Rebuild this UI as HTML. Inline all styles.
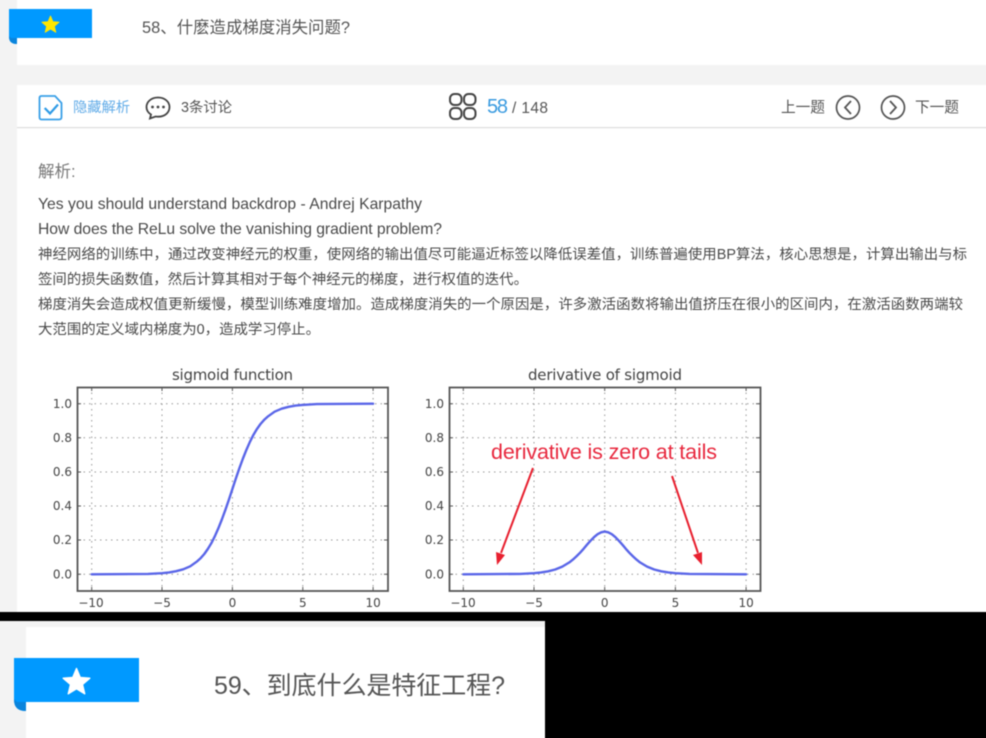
<!DOCTYPE html>
<html lang="zh-CN"><head><meta charset="utf-8"><title>58</title>
<style>
html,body{margin:0;padding:0;background:#fff;width:986px;height:738px;overflow:hidden}
svg{display:block;margin:-10px 0 0 -10px;filter:blur(.5px)}
text{font-family:"Liberation Sans","Noto Sans CJK SC",sans-serif;white-space:pre}
.d,.d text{font-family:"DejaVu Sans",sans-serif;fill:#444}
.t{font-size:12px}
.g{stroke:#999;stroke-width:1;stroke-dasharray:1.5 4;fill:none}
.c{font-size:14.4px;fill:#4a4a4a}
.e{font-size:15.7px;fill:#4a4a4a}
.ax{fill:none;stroke:#555;stroke-width:1.8}
.k{stroke:#555;stroke-width:1;fill:none}
.cv{fill:none;stroke:#5a66e8;stroke-width:2.4;stroke-linejoin:round;stroke-linecap:round}
</style></head><body>
<svg width="1006" height="758" viewBox="-10 -10 1006 758" xmlns="http://www.w3.org/2000/svg">
<defs><polygon id="s" points="0,-1 .265,-.364 .951,-.309 .428,.139 .588,.809 0,.45 -.588,.809 -.428,.139 -.951,-.309 -.265,-.364"/></defs>
<rect x="-10" y="-10" width="1006" height="758" fill="#fff"/>
<rect x="-10" y="-10" width="27" height="622" fill="#f3f3f3"/>
<rect x="17" y="65" width="979" height="20" fill="#f3f3f3"/>
<rect x="17" y="127" width="979" height="1.2" fill="#ddd"/>

<path d="M9 9H92V38H17V44Q9 44 9 37Z" fill="#0099ff"/>
<path d="M9 36Q9 44 17 44V38H11Z" fill="#0a84dc"/>
<use href="#s" transform="translate(50.500 25) scale(9)" fill="#ffe600" stroke="#ffe600" stroke-width=".1" stroke-linejoin="round"/>
<text x="142" y="33" font-size="16.400" fill="#555" textLength="208">58、什麽造成梯度消失问题?</text>

<path d="M41.500 96H55L61.500 103V117Q61.500 119.500 59 119.500H41.500Q39.500 119.500 39.500 117V98Q39.500 96 41.500 96Z" fill="none" stroke="#3aa0e8" stroke-width="1.800"/>
<path d="M44.700 108L50 113.500L58 104.500" fill="none" stroke="#2f9be6" stroke-width="2.200"/>
<text x="73" y="112" font-size="14.300" fill="#62ace8" textLength="57">隐藏解析</text>
<path d="M158 97.500C151 97.500 146.500 102 146.500 107C146.500 110.500 148.500 113 151 114.500L150 118.500L155.500 116.500C156.500 116.700 157 116.700 158 116.700C165 116.700 169.500 112.500 169.500 107C169.500 102 165 97.500 158 97.500Z" fill="none" stroke="#444" stroke-width="1.800"/>
<circle cx="152.500" cy="107" r="1.400" fill="#444"/><circle cx="158" cy="107" r="1.400" fill="#444"/><circle cx="163.500" cy="107" r="1.400" fill="#444"/>
<text x="181" y="112" font-size="14.400" fill="#555" textLength="51">3条讨论</text>

<g fill="none" stroke="#444" stroke-width="2">
<rect x="450" y="94" width="11.500" height="11" rx="4.500"/><rect x="464" y="94" width="11.500" height="11" rx="4.500"/>
<rect x="450" y="108" width="11.500" height="11" rx="4.500"/><rect x="464" y="108" width="11.500" height="11" rx="4.500"/>
</g>
<text x="487" y="113" font-size="20" fill="#3a9be0" textLength="21">58</text>
<text x="512" y="113" font-size="15.500" fill="#555" textLength="36">/ 148</text>
<text x="781" y="112" font-size="14.700" fill="#555" textLength="44">上一题</text>
<circle cx="848" cy="107.500" r="11.500" fill="none" stroke="#555" stroke-width="1.700"/>
<path d="M851 101L845 107.500L851 114" fill="none" stroke="#555" stroke-width="1.800"/>
<circle cx="893" cy="107.500" r="11.500" fill="none" stroke="#555" stroke-width="1.700"/>
<path d="M890 101L896 107.500L890 114" fill="none" stroke="#555" stroke-width="1.800"/>
<text x="915" y="112" font-size="14.700" fill="#555" textLength="44">下一题</text>

<text x="38" y="177" font-size="16.500" fill="#777">解析:</text>
<text class="e" x="38" y="209" textLength="384">Yes you should understand backdrop - Andrej Karpathy</text>
<text class="e" x="38" y="234" textLength="404">How does the ReLu solve the vanishing gradient problem?</text>
<text class="c" x="38" y="259" textLength="929">神经网络的训练中，通过改变神经元的权重，使网络的输出值尽可能逼近标签以降低误差值，训练普遍使用BP算法，核心思想是，计算出输出与标</text>
<text class="c" x="38" y="284" textLength="490">签间的损失函数值，然后计算其相对于每个神经元的梯度，进行权值的迭代。</text>
<text class="c" x="38" y="309" textLength="925">梯度消失会造成权值更新缓慢，模型训练难度增加。造成梯度消失的一个原因是，许多激活函数将输出值挤压在很小的区间内，在激活函数两端较</text>
<text class="c" x="38" y="334" textLength="282">大范围的定义域内梯度为0，造成学习停止。</text>

<!-- left plot -->
<g class="g">
<path d="M78 403.700H388M78 437.800H388M78 472H388M78 506H388M78 540H388M78 574.300H388"/>
<path d="M91.700 387V591M162 387V591M232.400 387V591M302.800 387V591M373.100 387V591"/>
</g>
<rect class="ax" x="77.500" y="387.500" width="310.500" height="203.500"/>
<path class="k" d="M77 403.700h4M77 437.800h4M77 472h4M77 506h4M77 540h4M77 574.300h4M388 403.700h-4M388 437.800h-4M388 472h-4M388 506h-4M388 540h-4M388 574.300h-4M91.700 591v-4M162 591v-4M232.400 591v-4M302.800 591v-4M373.100 591v-4M91.700 387v4M162 387v4M232.400 387v4M302.800 387v4M373.100 387v4"/>
<polyline class="cv" points="91.700,574.300 148,573.900 162,573.200 169.100,572.400 176.100,571.200 183.200,569.300 190.200,566.300 197.200,561.300 200.700,558.100 204.300,554 207.800,549 211.300,543.300 214.800,536.300 218.300,528.400 221.850,519.500 225.400,509.800 228.900,499.600 232.400,489 235.900,478.400 239.400,468.200 242.950,458.500 246.500,449.600 250,441.700 253.500,434.700 257,428.900 260.500,424 264.100,419.900 267.600,416.700 274.600,411.700 281.600,408.700 288.700,406.800 295.700,405.600 302.800,404.900 316.800,404.100 373.100,403.700"/>
<text class="d" x="172" y="380" font-size="15" textLength="121">sigmoid function</text>
<g class="d t" text-anchor="end">
<text x="72" y="408">1.0</text><text x="72" y="442">0.8</text><text x="72" y="476">0.6</text><text x="72" y="510">0.4</text><text x="72" y="544">0.2</text><text x="72" y="578.500">0.0</text>
</g>
<g class="d t" text-anchor="middle">
<text x="91" y="607">−10</text><text x="162" y="607">−5</text><text x="232.400" y="607">0</text><text x="302.800" y="607">5</text><text x="373.100" y="607">10</text>
</g>

<!-- right plot -->
<g class="g">
<path d="M450 403.700H760M450 437.800H760M450 472H760M450 506H760M450 540H760M450 574.300H760"/>
<path d="M463.300 387V591M534 387V591M604.700 387V591M675.400 387V591M746.100 387V591"/>
</g>
<rect class="ax" x="449.500" y="387.500" width="311" height="203.500"/>
<path class="k" d="M449 403.700h4M449 437.800h4M449 472h4M449 506h4M449 540h4M449 574.300h4M760 403.700h-4M760 437.800h-4M760 472h-4M760 506h-4M760 540h-4M760 574.300h-4M463.300 591v-4M534 591v-4M604.700 591v-4M675.400 591v-4M746.100 591v-4M463.300 387v4M534 387v4M604.700 387v4M675.400 387v4M746.100 387v4"/>
<polyline class="cv" points="463.300,574.300 519.900,573.900 534,573.200 541.100,572.400 548.100,571.300 555.200,569.500 562.300,566.600 569.350,562.400 572.900,559.600 576.400,556.400 580,552.800 583.500,548.900 587,544.700 590.560,540.700 594.100,537.100 597.600,534.200 601.200,532.300 604.700,531.600 608.200,532.300 611.800,534.200 615.300,537.100 618.800,540.700 622.400,544.700 625.900,548.900 629.400,552.800 633,556.400 636.500,559.600 640,562.400 647.100,566.600 654.200,569.500 661.300,571.300 668.300,572.400 675.400,573.200 689.500,573.900 746.100,574.300"/>
<text class="d" x="528" y="380" font-size="15" textLength="154">derivative of sigmoid</text>
<g class="d t" text-anchor="end">
<text x="444" y="408">1.0</text><text x="444" y="442">0.8</text><text x="444" y="476">0.6</text><text x="444" y="510">0.4</text><text x="444" y="544">0.2</text><text x="444" y="578.500">0.0</text>
</g>
<g class="d t" text-anchor="middle">
<text x="463" y="607">−10</text><text x="534" y="607">−5</text><text x="604.700" y="607">0</text><text x="675.400" y="607">5</text><text x="746.100" y="607">10</text>
</g>
<text x="491" y="459" font-size="21.500" fill="#e8283e" textLength="226">derivative is zero at tails</text>
<path d="M533 468L501 553" fill="none" stroke="#e8202f" stroke-width="2"/>
<polygon points="497,565 496,552 505,555" fill="#e8202f"/>
<path d="M672 476L698 553" fill="none" stroke="#e8202f" stroke-width="2"/>
<polygon points="702,565 693,555 702,552" fill="#e8202f"/>

<!-- bottom -->
<rect x="-10" y="612" width="1006" height="9" fill="#000"/>
<rect x="-10" y="621" width="555" height="127" fill="#fff"/>
<rect x="-10" y="621" width="555" height="6" fill="#f3f3f3"/>
<rect x="-10" y="621" width="36" height="127" fill="#f3f3f3"/>
<rect x="545" y="621" width="451" height="127" fill="#000"/>
<path d="M14 658H139V702H26V711Q14 711 14 700Z" fill="#0099ff"/>
<path d="M14 699Q14 711 26 711V702H17Z" fill="#0a84dc"/>
<use href="#s" transform="translate(76.500 682.500) scale(14)" fill="#fff" stroke="#fff" stroke-width=".1" stroke-linejoin="round"/>
<text x="214" y="694" font-size="25" fill="#555" textLength="291">59、到底什么是特征工程?</text>
</svg>
</body></html>
